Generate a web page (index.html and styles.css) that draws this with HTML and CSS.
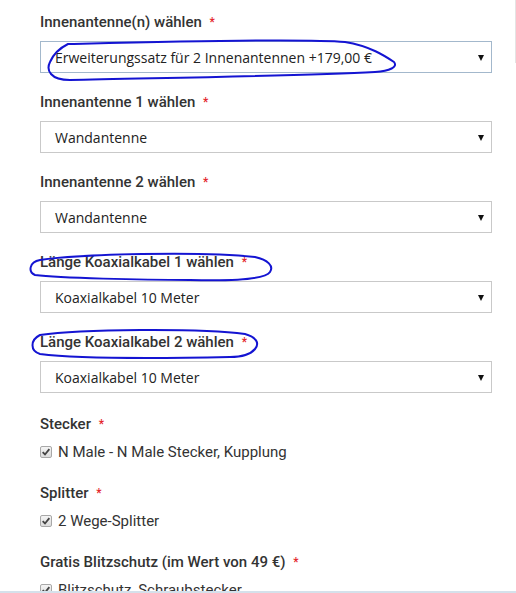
FILE: index.html
```html
<!DOCTYPE html>
<html lang="de">
<head>
<meta charset="utf-8">
<link rel="stylesheet" href="styles.css">
</head>
<body>
<div class="page">
  <form class="form">
    <div class="field">
      <div class="label">Innenantenne(n) wählen <span class="req">*</span></div>
      <div class="select focus"><span class="value">Erweiterungssatz für 2 Innenantennen +179,00 €</span><span class="arrow"></span></div>
    </div>
    <div class="field">
      <div class="label">Innenantenne 1 wählen <span class="req">*</span></div>
      <div class="select"><span class="value">Wandantenne</span><span class="arrow"></span></div>
    </div>
    <div class="field">
      <div class="label">Innenantenne 2 wählen <span class="req">*</span></div>
      <div class="select"><span class="value">Wandantenne</span><span class="arrow"></span></div>
    </div>
    <div class="field">
      <div class="label">Länge Koaxialkabel 1 wählen <span class="req">*</span></div>
      <div class="select"><span class="value">Koaxialkabel 10 Meter</span><span class="arrow"></span></div>
    </div>
    <div class="field">
      <div class="label">Länge Koaxialkabel 2 wählen <span class="req">*</span></div>
      <div class="select"><span class="value">Koaxialkabel 10 Meter</span><span class="arrow"></span></div>
    </div>
    <div class="field check-field first-check">
      <div class="label">Stecker <span class="req">*</span></div>
      <div class="check"><span class="box"><svg viewBox="0 0 12 12" width="10" height="10"><path d="M2 6.2 L4.8 9 L10 2.6" fill="none" stroke="#444" stroke-width="2.2"/></svg></span><span>N Male - N Male Stecker, Kupplung</span></div>
    </div>
    <div class="field check-field">
      <div class="label">Splitter <span class="req">*</span></div>
      <div class="check"><span class="box"><svg viewBox="0 0 12 12" width="10" height="10"><path d="M2 6.2 L4.8 9 L10 2.6" fill="none" stroke="#444" stroke-width="2.2"/></svg></span><span>2 Wege-Splitter</span></div>
    </div>
    <div class="field check-field">
      <div class="label">Gratis Blitzschutz (im Wert von 49 €) <span class="req">*</span></div>
      <div class="check"><span class="box"><svg viewBox="0 0 12 12" width="10" height="10"><path d="M2 6.2 L4.8 9 L10 2.6" fill="none" stroke="#444" stroke-width="2.2"/></svg></span><span>Blitzschutz, Schraubstecker</span></div>
    </div>
  </form>
  <div class="edge-line"></div>
  <svg class="marks" width="516" height="593" viewBox="0 0 516 593">
    <path d="M68 44 C150 42 300 38 345 42 C370 46 385 56 394 62 C398 67 390 71 375 72 C300 76 150 78 70 80 C50 80 46 70 50 62 C53 55 60 48 68 44" />
    <path d="M40 260 C80 254 200 251 255 257 C268 260 274 266 270 272 C265 280 230 281 190 280 C140 280 60 278 35 275 C28 272 29 262 40 260" />
    <path d="M40 335 C80 329 200 328 245 334 C256 337 260 343 255 349 C250 355 240 357 230 357 C180 358 80 359 40 354 C30 351 30 340 40 335" />
  </svg>
</div>
<div class="bottom-bar"></div>
</body>
</html>
```
FILE: styles.css
```css
html, body {
  margin: 0;
  padding: 0;
  background: #fff;
  overflow: hidden;
}
.page {
  position: relative;
  width: 516px;
  height: 593px;
}
.form {
  display: flex;
  flex-direction: column;
  gap: 18px;
  padding: 11px 0 0 40px;
  width: 452px;
}
.field {
  display: flex;
  flex-direction: column;
  gap: 8px;
}
.check-field {
  gap: 6px;
}
.first-check {
  margin-top: 2px;
}
.check-field + .check-field {
  margin-top: 1px;
}
.label {
  font-family: Roboto, "Liberation Sans", sans-serif;
  font-weight: 500;
  font-size: 15px;
  line-height: 21px;
  padding-top: 1px;
  color: #333;
}
.req {
  color: #e4252a;
  font-size: 12px;
  margin-left: 4px;
  vertical-align: 1px;
}
.select {
  display: flex;
  align-items: center;
  justify-content: space-between;
  height: 32px;
  box-sizing: border-box;
  border: 1px solid #c9c9c9;
  padding: 0 7px 0 14px;
  font-family: "Open Sans", "Liberation Sans", sans-serif;
  font-size: 14px;
  color: #222;
}
.select.focus {
  border-color: #a3b8cc;
}
.arrow {
  width: 0;
  height: 0;
  border-left: 3.5px solid transparent;
  border-right: 3.5px solid transparent;
  border-top: 6px solid #111;
  margin-top: 1px;
}
.check {
  display: flex;
  align-items: center;
  gap: 6px;
  font-family: Roboto, "Liberation Sans", sans-serif;
  font-size: 15px;
  line-height: 22px;
  color: #333;
}
.box {
  width: 12px;
  height: 12px;
  box-sizing: border-box;
  border: 1px solid #a8a8a8;
  border-radius: 2px;
  background: linear-gradient(#f4f4f4, #dcdcdc);
  display: flex;
  align-items: center;
  justify-content: center;
}
.edge-line {
  position: absolute;
  left: 515px;
  top: 0;
  width: 1px;
  height: 63px;
  background: #e4e4e4;
}
.marks {
  position: absolute;
  left: 0;
  top: 0;
  pointer-events: none;
}
.marks path {
  fill: none;
  stroke: #1414d2;
  stroke-width: 2;
  stroke-linecap: round;
}
.bottom-bar {
  position: fixed;
  left: 0;
  right: 0;
  bottom: 0;
  height: 2px;
  background: #d5e1eb;
}
```
